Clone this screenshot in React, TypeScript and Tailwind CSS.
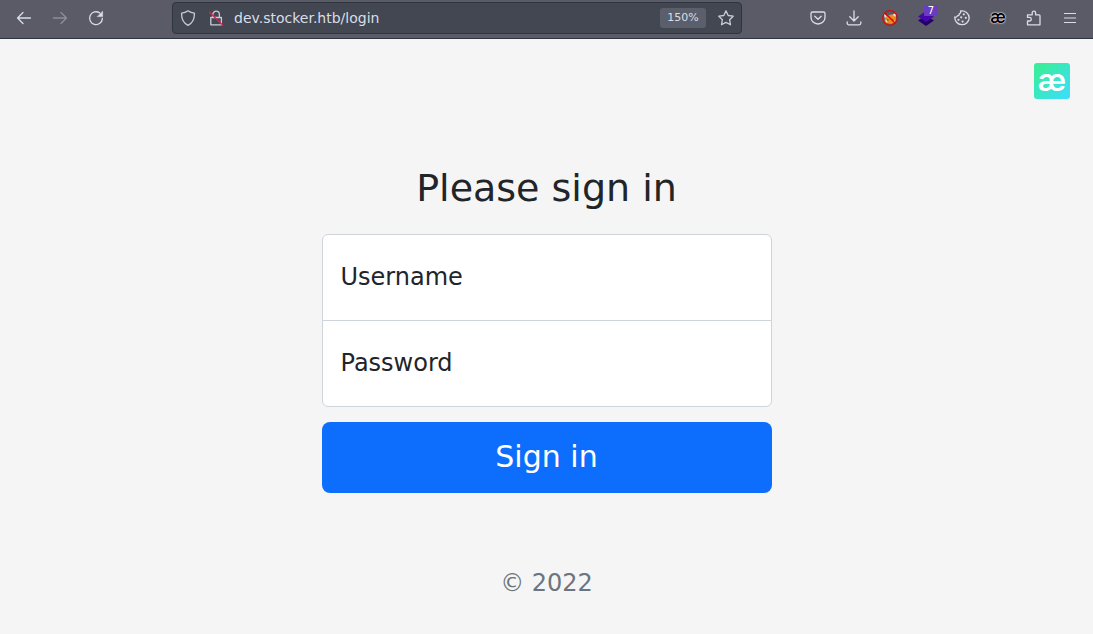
import { useState } from "react";
import type { ReactNode } from "react";

function Glyph({ children, className = "text-[#d8dee9]" }: { children: ReactNode; className?: string }) {
  return (
    <svg
      viewBox="0 0 16 16"
      className={`size-4 ${className}`}
      fill="none"
      stroke="currentColor"
      strokeWidth="1.3"
      strokeLinecap="round"
      strokeLinejoin="round"
      aria-hidden="true"
    >
      {children}
    </svg>
  );
}

function ToolButton({ label, disabled, children }: { label: string; disabled?: boolean; children: ReactNode }) {
  return (
    <button type="button" aria-label={label} disabled={disabled} className="relative flex h-9 w-9 shrink-0 items-center justify-center">
      {children}
    </button>
  );
}

function Toolbar() {
  const [address, setAddress] = useState("dev.stocker.htb/login");
  return (
    <header className="flex items-center border-b border-[#2e3440] bg-[#5b5b67] pr-[5px] pl-[6px] pb-[2px]">
      <nav className="flex" aria-label="History">
        <ToolButton label="Back">
          <Glyph><path d="M14.5 8H1.5M7 2.5 1.5 8 7 13.5" /></Glyph>
        </ToolButton>
        <ToolButton label="Forward" disabled>
          <Glyph className="text-[#8b8e9b]"><path d="M1.5 8h13M9 2.5 14.5 8 9 13.5" /></Glyph>
        </ToolButton>
        <ToolButton label="Reload">
          <Glyph>
            <path d="M14.4 8.4A6.4 6.4 0 1 1 11.8 3" />
            <path d="M14.6 1.6v5h-5z" fill="currentColor" strokeWidth="0.6" />
          </Glyph>
        </ToolButton>
      </nav>

      <div className="mx-[58px] flex h-8 min-w-0 flex-1 items-center rounded-[4px] border border-[#2e3440] bg-[#434752] px-[7px]">
        <Glyph className="shrink-0 text-[#c8cdd8]">
          <path d="M8 .8c2 1.5 4.2 2.2 6.4 2.4C14.6 9 12.5 13 8 15.3 3.5 13 1.4 9 1.6 3.2 3.8 3 6 2.3 8 .8z" />
        </Glyph>
        <Glyph className="ml-3 shrink-0 text-[#c8cdd8]">
          <path d="M2.8 7.5h10.6v7.3H2.8zM4.8 7.3V4.5a3.3 3.3 0 0 1 6.6 0v2.8" />
          <path d="M1.5 2.2 14.6 15" stroke="#e0214f" />
        </Glyph>
        <input
          aria-label="Address"
          value={address}
          onChange={(e) => setAddress(e.target.value)}
          className="ml-[10px] min-w-0 flex-1 bg-transparent text-sm text-[#d8dee9] outline-none"
        />
        <button type="button" className="h-5 w-[46px] rounded-[3px] bg-[#5b5f6b] text-[11px] text-[#d8dee9]">
          150%
        </button>
        <button type="button" aria-label="Bookmark this page" className="ml-3">
          <Glyph className="text-[#c8cdd8]">
            <path d="m8 .9 2.2 4.6 5 .7-3.6 3.5.9 5.1L8 12.4l-4.5 2.4.9-5.1L.8 6.2l5-.7z" />
          </Glyph>
        </button>
      </div>

      <div className="flex">
        <ToolButton label="Save to Pocket">
          <Glyph>
            <path d="M2.5 2h11a1.500 1.500 0 0 1 1.500 1.500v4a7 6.500 0 0 1-14 0v-4A1.500 1.500 0 0 1 2.500 2zM4.800 6.300 8 9.300l3.200-3" />
          </Glyph>
        </ToolButton>
        <ToolButton label="Downloads">
          <Glyph><path d="M8 .8v10M3.800 6.800 8 11l4.200-4.200M1.200 11.800v1.500a1.500 1.500 0 0 0 1.500 1.500h10.600a1.500 1.500 0 0 0 1.500-1.500v-1.500" /></Glyph>
        </ToolButton>
        <ToolButton label="Proxy switcher">
          <svg viewBox="0 0 16 16" className="size-4" aria-hidden="true">
            <path d="M4.500 6 9 4.500 13.500 5l.5 4-1.500 3.500L9 14l-5-1-1.500-3z" fill="#f08a1c" />
            <path d="m1.800 3.500 3 2.500-2 2.500zM14 3l-3.500 1.800 3 2.200zM3 10l2.500.5L5 13zM11 11l2.500-.5-1 2.500z" fill="#e8e4dc" />
            <path d="m5 9 2 1-1.500 1zM9.500 9.500l2-.5-1 1.500z" fill="#5a3b22" />
            <circle cx="8" cy="8" r="7.300" fill="none" stroke="#d40b0b" strokeWidth="1.200" />
            <path d="m2.700 2.700 10.600 10.600" stroke="#d40b0b" strokeWidth="1.400" />
          </svg>
        </ToolButton>
        <ToolButton label="Wappalyzer">
          <svg viewBox="0 0 16 16" className="size-4" aria-hidden="true">
            <path d="M0 10.500 8 5.500l8 5-8 5.500z" fill="#25006b" />
            <path d="M0 6.500 8 1l8 5.500-8 5.500z" fill="#4608ad" />
          </svg>
          <span className="absolute top-[5px] right-[6px] flex h-[11px] w-[14px] items-center justify-center rounded-[1px] bg-[#6a3cc0] text-[10px] leading-none text-white">
            7
          </span>
        </ToolButton>
        <ToolButton label="Cookie editor">
          <Glyph>
            <path d="M6.500 1A7.200 7.200 0 0 1 15.200 8 7.200 7.200 0 1 1 .8 7c1.200.5 2.200 0 2.400-1.200C4.800 5.800 5.400 5 5.200 3.800 6.400 3.400 7 2.400 6.500 1z" />
            <g fill="currentColor" stroke="none">
              <circle cx="9.800" cy="4.300" r="1.100" />
              <circle cx="7.200" cy="7.300" r="1.100" />
              <circle cx="11.800" cy="7.800" r="1.100" />
              <circle cx="4.500" cy="9.800" r="1.100" />
              <circle cx="8.600" cy="11.600" r="1.100" />
            </g>
          </Glyph>
        </ToolButton>
        <ToolButton label="Asciidoctor">
          <span className="pb-px font-[Inter,sans-serif] text-[17px] leading-none font-semibold text-black [text-shadow:0_0_1px_#fff,0_0_1px_#fff,0_0_2px_#fff]">æ</span>
        </ToolButton>
        <ToolButton label="Extensions">
          <Glyph>
            <path d="M1.500 14.800V11h2a1.800 1.800 0 0 0 0-3.600h-2V4.800h4.700V2.800a1.700 1.700 0 0 1 3.400 0v2H13a1 1 0 0 1 1 1v9z" />
          </Glyph>
        </ToolButton>
        <ToolButton label="Menu">
          <Glyph><path d="M2 3.500h12M2 8h12M2 12.500h12" strokeWidth="1.200" strokeLinecap="butt" /></Glyph>
        </ToolButton>
      </div>
    </header>
  );
}

function Field({ id, label, type, shape }: { id: string; label: string; type: string; shape: string }) {
  const [value, setValue] = useState("");
  return (
    <div className="relative">
      <input
        id={id}
        type={type}
        value={value}
        onChange={(e) => setValue(e.target.value)}
        className={`block h-[87px] w-full border border-[#ced4da] bg-white px-[18px] text-2xl outline-none ${shape}`}
      />
      {value === "" && (
        <label htmlFor={id} className="pointer-events-none absolute inset-y-0 left-[19px] flex items-center pb-px">
          {label}
        </label>
      )}
    </div>
  );
}

export default function App() {
  return (
    <div className="flex min-h-screen flex-col bg-[#f5f5f5] font-['DejaVu_Sans',sans-serif] text-[#212529]">
      <Toolbar />
      <main className="relative flex flex-1 flex-col items-center px-4 pt-[127px] pb-8 text-2xl">
        <button
          type="button"
          aria-label="Open extension"
          className="absolute top-6 right-[23px] flex size-9 items-center justify-center rounded-[3px] bg-linear-to-br from-[#3beca0] from-20% to-[#3fdcff] font-[Inter,sans-serif] text-[31px] leading-none font-semibold text-white"
        >
          <span className="pb-1">æ</span>
        </button>
        <form className="flex w-full max-w-[450px] flex-col text-left" onSubmit={(e) => e.preventDefault()}>
          <h1 className="mb-[23px] text-center text-[38px] leading-[45px]">Please sign in</h1>
          <Field id="username" label="Username" type="text" shape="rounded-t-md" />
          <div className="-mt-px">
            <Field id="password" label="Password" type="password" shape="rounded-b-md" />
          </div>
          <button type="submit" className="mt-[15px] h-[71px] rounded-lg bg-[#0d6efd] pb-[2px] text-3xl text-white">
            Sign in
          </button>
          <p className="mt-[72px] text-center leading-9 text-[#6c757d]">© 2022</p>
        </form>
      </main>
    </div>
  );
}
